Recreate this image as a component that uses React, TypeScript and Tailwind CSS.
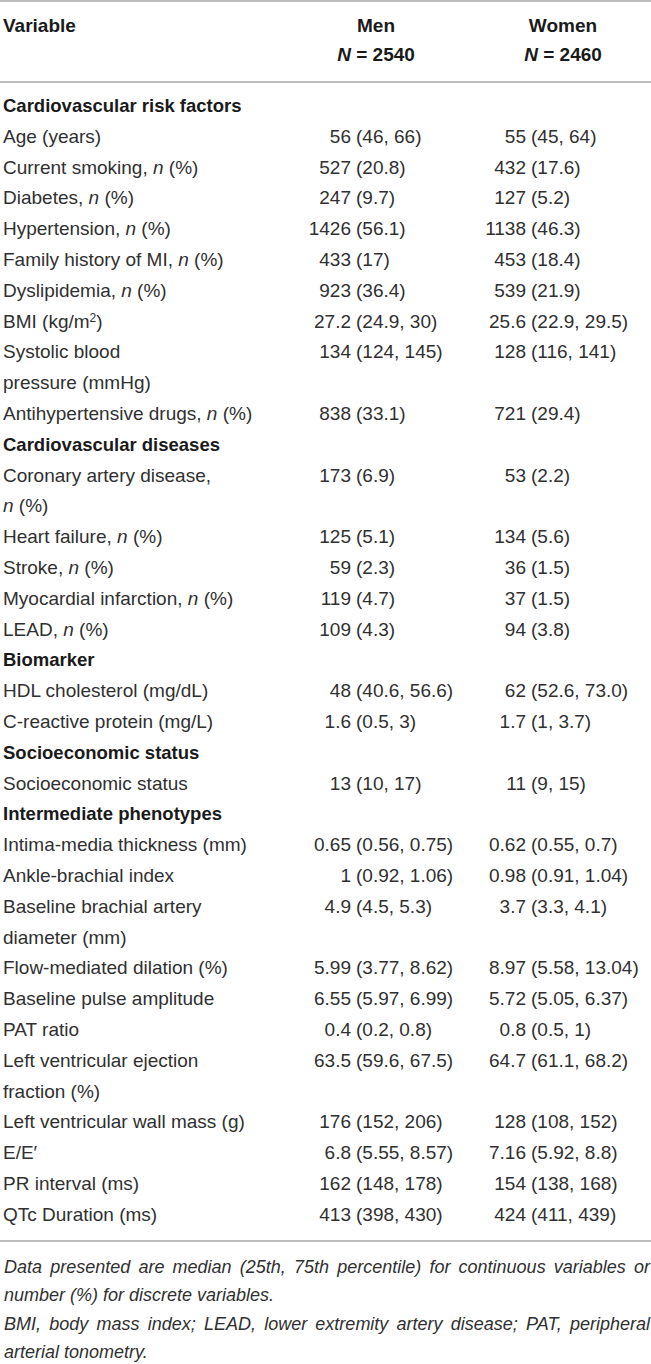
type Val = [string, string];
type Row =
  | { section: string }
  | { label: React.ReactNode; men: Val; women: Val };

const n = <i>n</i>;

const rows: Row[] = [
  { section: "Cardiovascular risk factors" },
  { label: "Age (years)", men: ["56", "(46, 66)"], women: ["55", "(45, 64)"] },
  { label: <>Current smoking, {n} (%)</>, men: ["527", "(20.8)"], women: ["432", "(17.6)"] },
  { label: <>Diabetes, {n} (%)</>, men: ["247", "(9.7)"], women: ["127", "(5.2)"] },
  { label: <>Hypertension, {n} (%)</>, men: ["1426", "(56.1)"], women: ["1138", "(46.3)"] },
  { label: <>Family history of MI, {n} (%)</>, men: ["433", "(17)"], women: ["453", "(18.4)"] },
  { label: <>Dyslipidemia, {n} (%)</>, men: ["923", "(36.4)"], women: ["539", "(21.9)"] },
  {
    label: (
      <>
        BMI (kg/m<sup className="text-[12px]">2</sup>)
      </>
    ),
    men: ["27.2", "(24.9, 30)"],
    women: ["25.6", "(22.9, 29.5)"],
  },
  {
    label: (
      <>
        Systolic blood
        <br />
        pressure (mmHg)
      </>
    ),
    men: ["134", "(124, 145)"],
    women: ["128", "(116, 141)"],
  },
  { label: <>Antihypertensive drugs, {n} (%)</>, men: ["838", "(33.1)"], women: ["721", "(29.4)"] },
  { section: "Cardiovascular diseases" },
  {
    label: (
      <>
        Coronary artery disease,
        <br />
        {n} (%)
      </>
    ),
    men: ["173", "(6.9)"],
    women: ["53", "(2.2)"],
  },
  { label: <>Heart failure, {n} (%)</>, men: ["125", "(5.1)"], women: ["134", "(5.6)"] },
  { label: <>Stroke, {n} (%)</>, men: ["59", "(2.3)"], women: ["36", "(1.5)"] },
  { label: <>Myocardial infarction, {n} (%)</>, men: ["119", "(4.7)"], women: ["37", "(1.5)"] },
  { label: <>LEAD, {n} (%)</>, men: ["109", "(4.3)"], women: ["94", "(3.8)"] },
  { section: "Biomarker" },
  { label: "HDL cholesterol (mg/dL)", men: ["48", "(40.6, 56.6)"], women: ["62", "(52.6, 73.0)"] },
  { label: "C-reactive protein (mg/L)", men: ["1.6", "(0.5, 3)"], women: ["1.7", "(1, 3.7)"] },
  { section: "Socioeconomic status" },
  { label: "Socioeconomic status", men: ["13", "(10, 17)"], women: ["11", "(9, 15)"] },
  { section: "Intermediate phenotypes" },
  { label: "Intima-media thickness (mm)", men: ["0.65", "(0.56, 0.75)"], women: ["0.62", "(0.55, 0.7)"] },
  { label: "Ankle-brachial index", men: ["1", "(0.92, 1.06)"], women: ["0.98", "(0.91, 1.04)"] },
  {
    label: (
      <>
        Baseline brachial artery
        <br />
        diameter (mm)
      </>
    ),
    men: ["4.9", "(4.5, 5.3)"],
    women: ["3.7", "(3.3, 4.1)"],
  },
  { label: "Flow-mediated dilation (%)", men: ["5.99", "(3.77, 8.62)"], women: ["8.97", "(5.58, 13.04)"] },
  { label: "Baseline pulse amplitude", men: ["6.55", "(5.97, 6.99)"], women: ["5.72", "(5.05, 6.37)"] },
  { label: "PAT ratio", men: ["0.4", "(0.2, 0.8)"], women: ["0.8", "(0.5, 1)"] },
  {
    label: (
      <>
        Left ventricular ejection
        <br />
        fraction (%)
      </>
    ),
    men: ["63.5", "(59.6, 67.5)"],
    women: ["64.7", "(61.1, 68.2)"],
  },
  { label: "Left ventricular wall mass (g)", men: ["176", "(152, 206)"], women: ["128", "(108, 152)"] },
  { label: "E/E\u2032", men: ["6.8", "(5.55, 8.57)"], women: ["7.16", "(5.92, 8.8)"] },
  { label: "PR interval (ms)", men: ["162", "(148, 178)"], women: ["154", "(138, 168)"] },
  { label: "QTc Duration (ms)", men: ["413", "(398, 430)"], women: ["424", "(411, 439)"] },
];

function ValueCells({ v }: { v: Val }) {
  return (
    <>
      <span className="text-right">{v[0]}</span>
      <span className="pl-[5px]">{v[1]}</span>
    </>
  );
}

export default function App() {
  return (
    <div className="w-[651px] bg-white font-['Liberation_Sans',Arial,sans-serif] text-[#303030]">
      <div className="border-t-2 border-b-2 border-[#bdbdbd] pt-[9px] pb-[12px] pl-[3px] text-[19px] font-bold leading-[29px] text-[#1a1a1a]">
        <div className="flex">
          <div className="w-[298px]">Variable</div>
          <div className="w-[150px] text-center">
            Men
            <br />
            <i>N</i> = 2540
          </div>
          <div className="ml-[37px] w-[150px] text-center">
            Women
            <br />
            <i>N</i> = 2460
          </div>
        </div>
      </div>

      <div className="pt-[8px] pb-[10px] pl-[3px] text-[19px] leading-[30.8px]">
        {rows.map((r, i) =>
          "section" in r ? (
            <div key={i} className="text-[18.5px] font-bold text-[#1a1a1a]">
              {r.section}
            </div>
          ) : (
            <div key={i} className="grid grid-cols-[297px_51px_125px_50px_1fr] items-start">
              <span>{r.label}</span>
              <ValueCells v={r.men} />
              <ValueCells v={r.women} />
            </div>
          )
        )}
      </div>

      <div className="border-t-2 border-[#bdbdbd] pt-[10.5px] pl-[4px] pr-[1px] text-[18px] italic leading-[28.5px] text-[#303030]">
        <div className="text-justify [text-align-last:justify]">
          Data presented are median (25th, 75th percentile) for continuous variables or
        </div>
        <div>number (%) for discrete variables.</div>
        <div className="text-justify [text-align-last:justify]">
          BMI, body mass index; LEAD, lower extremity artery disease; PAT, peripheral
        </div>
        <div>arterial tonometry.</div>
      </div>
    </div>
  );
}
